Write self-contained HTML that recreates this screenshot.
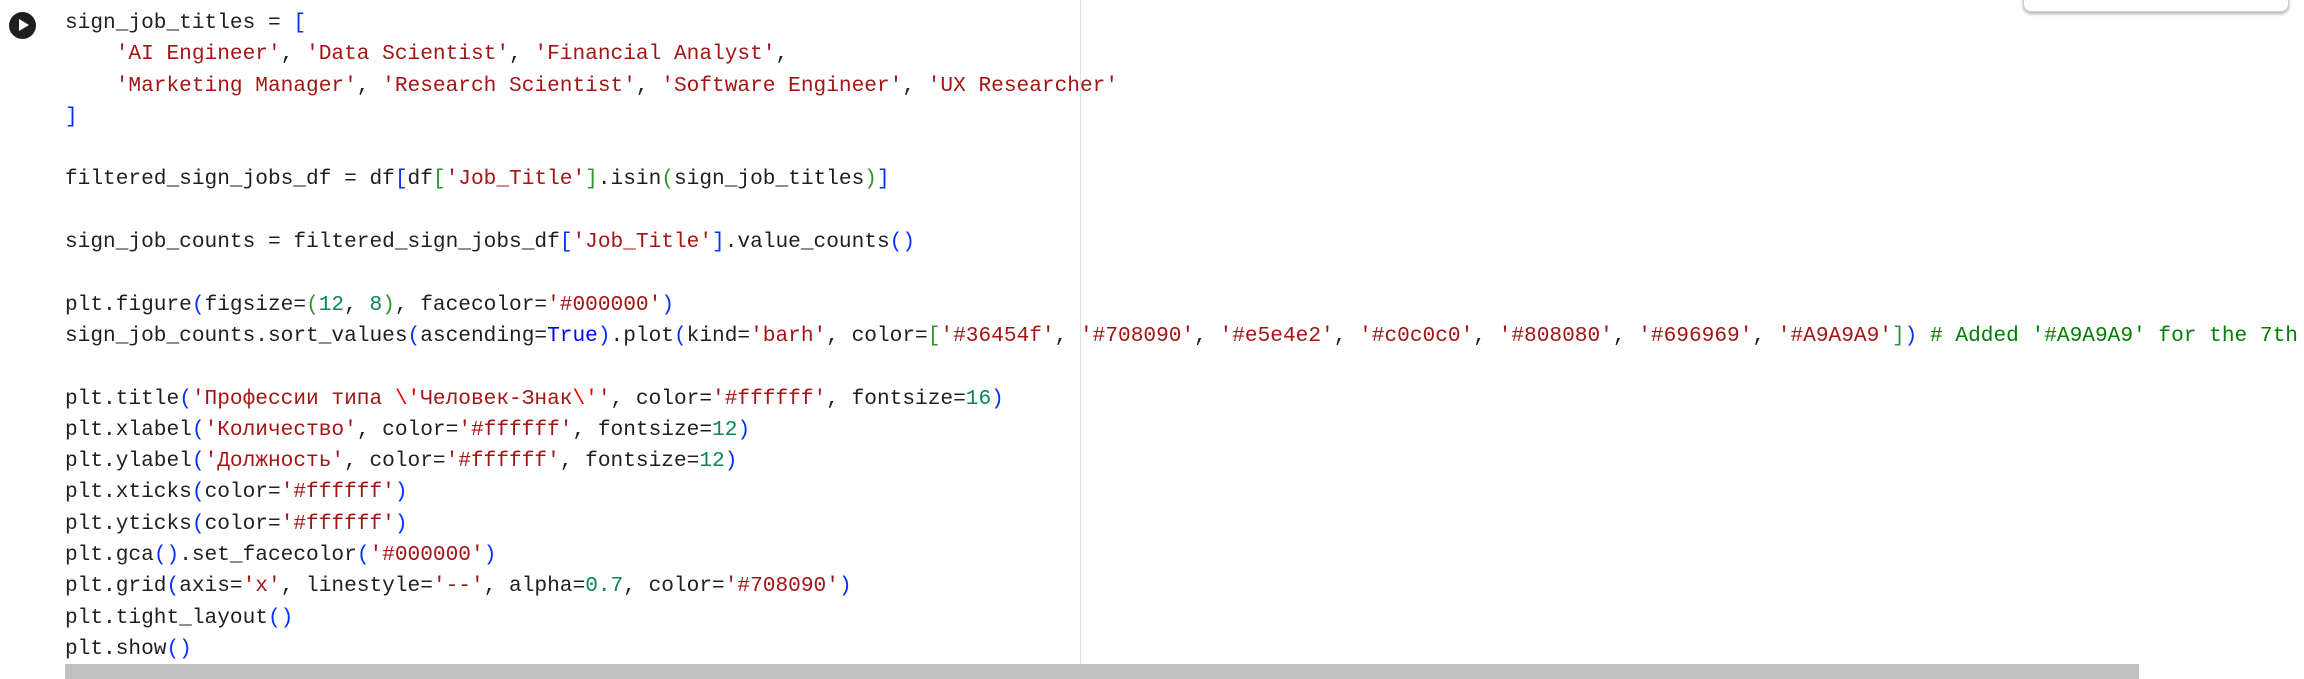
<!DOCTYPE html>
<html><head><meta charset="utf-8"><style>
html,body{margin:0;padding:0;background:#fff;width:2304px;height:679px;overflow:hidden;position:relative}
pre{position:absolute;left:65px;top:8px;margin:0;font-family:"Liberation Mono","DejaVu Sans Mono",monospace;font-size:21.15px;line-height:31.3px;color:#1f1f1f;white-space:pre}
.s{color:#a31515}.b{color:#0431fa}.g{color:#319331}.n{color:#098658}.c{color:#008000}.k{color:#0000ff}.e{color:#ee0000}
#vl{position:absolute;left:1080px;top:0;width:1px;height:679px;background:#e0e0e0}
#bar{position:absolute;left:65px;top:664px;width:2074px;height:15px;background:#c1c1c1}
#play{position:absolute;left:9px;top:12px;width:27px;height:27px;border-radius:50%;background:#1f1f1f}
#play:after{content:"";position:absolute;left:10px;top:7px;border-left:10px solid #fff;border-top:6.5px solid transparent;border-bottom:6.5px solid transparent}
#box{position:absolute;left:2023px;top:-10px;width:264px;height:20px;border:1px solid #ccc;border-radius:8px;background:#fff;box-shadow:0 2px 3px rgba(0,0,0,.3)}
</style></head><body>
<div id="vl"></div>
<div id="play"></div>
<div id="box"></div>
<pre>sign_job_titles = <span class="b">[</span>
    <span class="s">'AI Engineer'</span>, <span class="s">'Data Scientist'</span>, <span class="s">'Financial Analyst'</span>,
    <span class="s">'Marketing Manager'</span>, <span class="s">'Research Scientist'</span>, <span class="s">'Software Engineer'</span>, <span class="s">'UX Researcher'</span>
<span class="b">]</span>

filtered_sign_jobs_df = df<span class="b">[</span>df<span class="g">[</span><span class="s">'Job_Title'</span><span class="g">]</span>.isin<span class="g">(</span>sign_job_titles<span class="g">)</span><span class="b">]</span>

sign_job_counts = filtered_sign_jobs_df<span class="b">[</span><span class="s">'Job_Title'</span><span class="b">]</span>.value_counts<span class="b">()</span>

plt.figure<span class="b">(</span>figsize=<span class="g">(</span><span class="n">12</span>, <span class="n">8</span><span class="g">)</span>, facecolor=<span class="s">'#000000'</span><span class="b">)</span>
sign_job_counts.sort_values<span class="b">(</span>ascending=<span class="k">True</span><span class="b">)</span>.plot<span class="b">(</span>kind=<span class="s">'barh'</span>, color=<span class="g">[</span><span class="s">'#36454f'</span>, <span class="s">'#708090'</span>, <span class="s">'#e5e4e2'</span>, <span class="s">'#c0c0c0'</span>, <span class="s">'#808080'</span>, <span class="s">'#696969'</span>, <span class="s">'#A9A9A9'</span><span class="g">]</span><span class="b">)</span> <span class="c"># Added '#A9A9A9' for the 7th</span>

plt.title<span class="b">(</span><span class="s">'Профессии типа <span class="e">\'</span>Человек-Знак<span class="e">\'</span>'</span>, color=<span class="s">'#ffffff'</span>, fontsize=<span class="n">16</span><span class="b">)</span>
plt.xlabel<span class="b">(</span><span class="s">'Количество'</span>, color=<span class="s">'#ffffff'</span>, fontsize=<span class="n">12</span><span class="b">)</span>
plt.ylabel<span class="b">(</span><span class="s">'Должность'</span>, color=<span class="s">'#ffffff'</span>, fontsize=<span class="n">12</span><span class="b">)</span>
plt.xticks<span class="b">(</span>color=<span class="s">'#ffffff'</span><span class="b">)</span>
plt.yticks<span class="b">(</span>color=<span class="s">'#ffffff'</span><span class="b">)</span>
plt.gca<span class="b">()</span>.set_facecolor<span class="b">(</span><span class="s">'#000000'</span><span class="b">)</span>
plt.grid<span class="b">(</span>axis=<span class="s">'x'</span>, linestyle=<span class="s">'--'</span>, alpha=<span class="n">0.7</span>, color=<span class="s">'#708090'</span><span class="b">)</span>
plt.tight_layout<span class="b">()</span>
plt.show<span class="b">()</span></pre>
<div id="bar"></div>
</body></html>
